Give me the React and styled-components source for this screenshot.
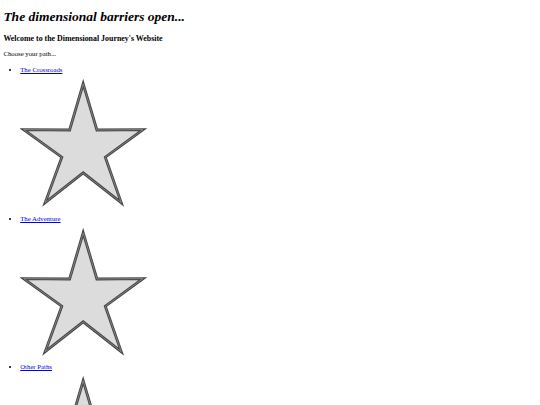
import React from 'react';
import styled, { createGlobalStyle } from 'styled-components';

const GlobalStyle = createGlobalStyle`
  body {
    margin: 3.375px;
    font-family: "Liberation Serif", "Times New Roman", serif;
    font-size: 6.75px;
    color: #000;
    background: #fff;
  }
`;

const Title = styled.h1`
  font-size: 13.5px;
  font-style: italic;
  font-weight: bold;
  margin: 6px 0 9.05px;
`;

const Welcome = styled.h3`
  font-size: 7.9px;
  font-weight: bold;
  margin: 7.9px 0 6.9px;
`;

const Intro = styled.p`
  font-size: 6.75px;
  margin: 6.75px 0;
`;

const PathList = styled.ul`
  margin: 8.75px 0 6.75px;
  padding-left: 16.875px;
  list-style: disc;
`;

const PathItem = styled.li`
  font-size: 6.75px;
`;

const PathLink = styled.a`
  color: #0000ee;
  text-decoration: underline;
`;

const StarArt = styled.svg`
  display: block;
  width: 130px;
  height: 141.5px;
`;

const starPoints =
  '63.2,10.8 76.9,57 123,56.6 85.3,84.2 101.2,129.6 63.2,99.9 25.2,129.6 41.8,84.2 3.6,56.6 49.6,57';

const Star = () => (
  <StarArt viewBox="0 0 130 141.5">
    <polygon points={starPoints} fill="#dcdcdc" stroke="#444" strokeWidth="2.8" />
    <polygon points={starPoints} fill="none" stroke="#8a8a8a" strokeWidth="0.9" />
  </StarArt>
);

const paths = ['The Crossroads', 'The Adventure', 'Other Paths'];

const App = () => (
  <>
    <GlobalStyle />
    <Title>The dimensional barriers open...</Title>
    <Welcome>Welcome to the Dimensional Journey's Website</Welcome>
    <Intro>Choose your path...</Intro>
    <PathList>
      {paths.map((name) => (
        <PathItem key={name}>
          <PathLink href="#">{name}</PathLink>
          <Star />
        </PathItem>
      ))}
    </PathList>
  </>
);

export default App;
